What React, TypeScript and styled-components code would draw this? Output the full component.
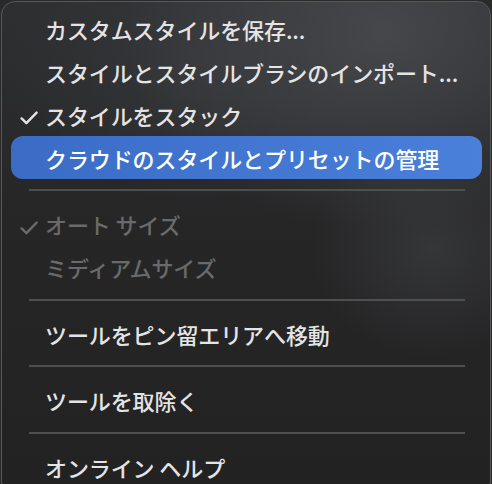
import React from 'react'
import styled, { createGlobalStyle } from 'styled-components'

const GlobalStyles = createGlobalStyle`
  html, body {
    margin: 0;
    padding: 0;
    background: #2a2a2b;
    overflow: hidden;
  }
  body {
    font-family: 'Noto Sans CJK JP', 'Noto Sans', sans-serif;
    -webkit-font-smoothing: antialiased;
  }
`

const Panel = styled.div`
  box-sizing: border-box;
  width: 490px;
  height: 494px;
  margin: 1px 0 0 1px;
  padding: 5px 0 0;
  border-radius: 14px;
  border: 1px solid #56585b;
  background:
    radial-gradient(ellipse 260px 200px at 78% 6%, rgba(72, 74, 79, 0.9), rgba(72, 74, 79, 0) 100%),
    radial-gradient(ellipse 120px 110px at 88% 50%, rgba(64, 65, 68, 0.6), rgba(64, 65, 68, 0) 100%),
    radial-gradient(ellipse 200px 140px at 40% 12%, rgba(56, 58, 61, 0.7), rgba(56, 58, 61, 0) 100%),
    linear-gradient(180deg, #2e2f31 0%, #262627 45%, #222223 100%);
  overflow: hidden;
  display: flex;
  flex-direction: column;
`

const Item = styled.div<{ $active?: boolean; $disabled?: boolean }>`
  position: relative;
  height: 43px;
  flex: none;
  margin: 0 8px 0 9px;
  padding-left: 34px;
  display: flex;
  align-items: center;
  border-radius: 12px;
  font-size: 22px;
  font-weight: 500;
  letter-spacing: -0.1px;
  white-space: nowrap;
  color: ${(p) => (p.$disabled ? '#6a6a6b' : p.$active ? '#ffffff' : '#e4e4e5')};
  background: ${(p) => (p.$active ? 'linear-gradient(90deg, #3a6cc6 0%, #4a80da 100%)' : 'transparent')};
`

const Check = styled.svg`
  position: absolute;
  left: 9px;
  top: 18px;
  width: 18px;
  height: 14px;
`

const Separator = styled.div`
  height: 23.5px;
  flex: none;
  display: flex;
  padding: 10px 25px 0 27px;
  box-sizing: border-box;
  &::after {
    content: '';
    flex: 1;
    height: 2px;
    background: #4e4f51;
  }
`

type Entry =
  | { kind: 'item'; label: string; checked?: boolean; active?: boolean; disabled?: boolean }
  | { kind: 'sep' }

const entries: Entry[] = [
  { kind: 'item', label: 'カスタムスタイルを保存...' },
  { kind: 'item', label: 'スタイルとスタイルブラシのインポート...' },
  { kind: 'item', label: 'スタイルをスタック', checked: true },
  { kind: 'item', label: 'クラウドのスタイルとプリセットの管理', active: true },
  { kind: 'sep' },
  { kind: 'item', label: 'オート サイズ', checked: true, disabled: true },
  { kind: 'item', label: 'ミディアムサイズ', disabled: true },
  { kind: 'sep' },
  { kind: 'item', label: 'ツールをピン留エリアへ移動' },
  { kind: 'sep' },
  { kind: 'item', label: 'ツールを取除く' },
  { kind: 'sep' },
  { kind: 'item', label: 'オンライン ヘルプ' }
]

const CheckMark = () => (
  <Check viewBox="0 0 18 14">
    <path
      d="M1.6 7.4 L6.4 12.2 L16.6 1.6"
      fill="none"
      stroke="currentColor"
      strokeWidth="2.4"
      strokeLinecap="round"
      strokeLinejoin="round"
    />
  </Check>
)

const App = () => (
  <>
    <GlobalStyles />
    <Panel>
      {entries.map((e, i) =>
        e.kind === 'sep' ? (
          <Separator key={i} />
        ) : (
          <Item key={i} $active={e.active} $disabled={e.disabled}>
            {e.checked && <CheckMark />}
            {e.label}
          </Item>
        )
      )}
    </Panel>
  </>
)

export default App
